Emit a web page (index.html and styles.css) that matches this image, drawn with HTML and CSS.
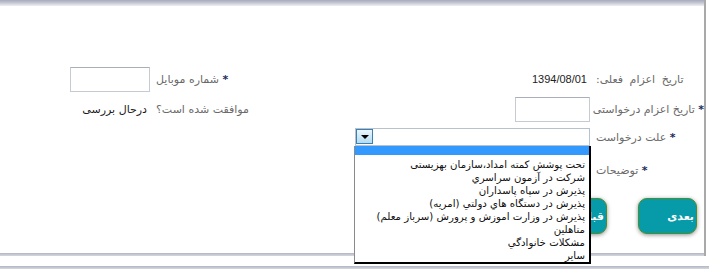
FILE: index.html
```html
<!DOCTYPE html>
<html lang="fa">
<head>
  <meta charset="UTF-8">
  <title>درخواست تغییر تاریخ اعزام</title>
  <link rel="stylesheet" href="styles.css">
</head>
<body>
  <div class="page">
    <div class="topbar"></div>

    <div class="form">
      <div class="label wide">تاریخ اعزام فعلی:</div>
      <div class="value"><span class="current">1394/08/01</span></div>
      <div class="label"><span class="req">*</span> شماره موبایل</div>
      <div class="value"><input type="text" class="mobile"></div>

      <div class="label"><span class="req">*</span> تاریخ اعزام درخواستی</div>
      <div class="value"><input type="text" class="date"></div>
      <div class="label">موافقت شده است؟</div>
      <div class="value"><span class="status">درحال بررسی</span></div>

      <div class="label"><span class="req">*</span> علت درخواست</div>
      <div class="value">
        <div class="select">
          <span class="arrow"></span>
          <ul class="options">
            <li class="selected"></li>
            <li>تحت پوشش کمته امداد،سازمان بهزیستی</li>
            <li>شرکت در آزمون سراسري</li>
            <li>پذیرش در سپاه پاسداران</li>
            <li>پذیرش در دستگاه هاي دولتي (امریه)</li>
            <li>پذیرش در وزارت اموزش و پرورش (سرباز معلم)</li>
            <li>متاهلین</li>
            <li>مشکلات خانوادگي</li>
            <li>سایر</li>
          </ul>
        </div>
      </div>
      <div></div>
      <div></div>

      <div class="label"><span class="req">*</span> توضیحات</div>
      <div class="value"><textarea class="notes"></textarea></div>
    </div>

    <div class="actions">
      <button class="btn"><span>بعدی</span></button>
      <button class="btn"><span>قبلی</span></button>
    </div>

    <div class="band"></div>
  </div>
  <div class="band bottom"></div>
</body>
</html>
```

FILE: styles.css
```css
* { box-sizing: border-box; }
body {
  margin: 0;
  font-family: "DejaVu Sans", sans-serif;
  font-size: 11px;
  color: #6a6a6a;
  background: #fff;
}
.page {
  width: 706px;
  height: 256px;
  border-right: 2px solid #a9a9a9;
  display: flex;
  flex-direction: column;
}
.topbar {
  height: 6px;
  background: linear-gradient(#a6aabb, #c6c9d4 50%, #eef0f3);
}
.form {
  direction: rtl;
  display: grid;
  grid-template-columns: 112px 238px 200px 84px;
  grid-template-rows: 30px 31px 24px 42px;
  align-items: center;
  margin-top: 58px;
}
.label {
  text-align: left;
  padding-left: 4px;
  white-space: nowrap;
}
.label.wide {
  word-spacing: 3px;
}
.form .label:nth-child(4n+3) {
  padding-left: 2px;
}
.value {
  padding-right: 2px;
  display: flex;
  align-items: center;
}
.req {
  color: #1c2d5a;
  font-weight: bold;
}
.current {
  color: #222;
  font-family: "Liberation Sans", sans-serif;
  font-size: 11px;
  padding-right: 3px;
}
.status {
  color: #1a1a1a;
  padding-right: 5px;
}
input, textarea {
  border: 1px solid #c6cbd3;
  border-top-color: #a8afba;
  background: #fff;
  font-family: inherit;
}
.date {
  width: 75px;
  height: 25px;
}
.mobile {
  width: 80px;
  height: 25px;
  margin-right: 2px;
}
.notes {
  width: 235px;
  height: 34px;
  resize: none;
}
.select {
  position: relative;
  width: 235px;
  height: 18px;
  border: 1px solid #b6c2ce;
  background: #fff;
}
.arrow {
  position: absolute;
  left: 0;
  top: 0;
  width: 17px;
  height: 15px;
  border: 1px solid #3c7fb1;
  background: linear-gradient(#eaf6fd, #b3dcf2);
}
.arrow::after {
  content: "";
  position: absolute;
  left: 4px;
  top: 5px;
  border-left: 4px solid transparent;
  border-right: 4px solid transparent;
  border-top: 4px solid #000;
}
.options {
  position: absolute;
  z-index: 2;
  top: 17px;
  left: -2px;
  right: -2px;
  margin: 0;
  padding: 0;
  list-style: none;
  background: #fff;
  border-left: 1px solid #8a8a8a;
  border-right: 2px solid #000;
  border-bottom: 2px solid #000;
  color: #111;
  font-size: 10.2px;
}
.options li {
  height: 13px;
  line-height: 13px;
  padding-right: 4px;
  white-space: nowrap;
}
.options li.selected {
  height: 9px;
  margin-bottom: 3px;
  background: #3399ff;
}
.actions {
  direction: rtl;
  display: flex;
  gap: 31px;
  padding-right: 7px;
  margin-top: 7px;
}
.btn {
  width: 59px;
  height: 36px;
  padding: 0 2px 0 0;
  border: 1px solid #4b8e2c;
  border-radius: 9px;
  background: #079aa8;
  box-shadow: 0 1px 4px rgba(0, 0, 0, 0.45);
  color: #fff;
  font-family: "DejaVu Sans", sans-serif;
  font-size: 11px;
  font-weight: bold;
  text-align: right;
  white-space: nowrap;
}
.band {
  margin-top: auto;
  height: 3px;
  background: linear-gradient(#b3b6c3, #d6d8df);
}
.band.bottom {
  margin-top: 10px;
  width: 100%;
}
```
